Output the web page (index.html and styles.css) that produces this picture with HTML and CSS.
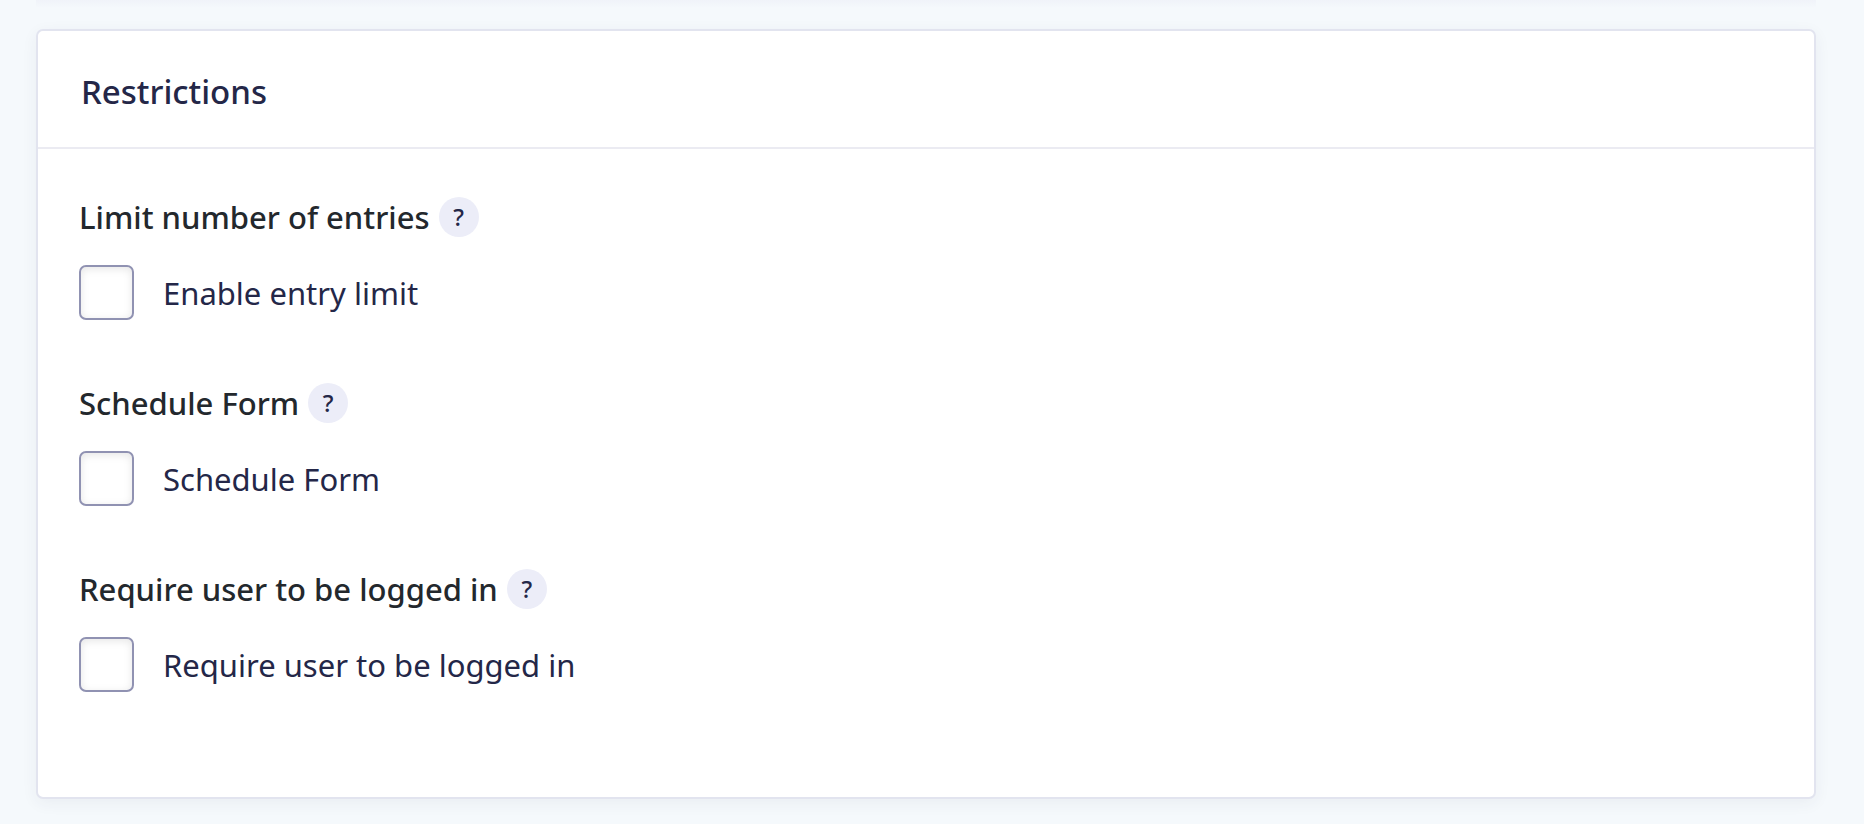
FILE: index.html
```
<!DOCTYPE html>
<html lang="en">
<head>
<meta charset="utf-8">
<title>Form Settings</title>
<link rel="stylesheet" href="styles.css">
</head>
<body>
<form class="settings">
  <section class="panel">
    <header class="panel-header">
      <h2 class="panel-title">Restrictions</h2>
    </header>
    <div class="panel-content">
      <div class="field">
        <div class="field-header">
          <h3 class="field-title">Limit number of entries</h3>
          <button type="button" class="tooltip">?</button>
        </div>
        <div class="choice">
          <input type="checkbox" id="limitEntries" name="limitEntries">
          <label for="limitEntries">Enable entry limit</label>
        </div>
      </div>
      <div class="field">
        <div class="field-header">
          <h3 class="field-title">Schedule Form</h3>
          <button type="button" class="tooltip">?</button>
        </div>
        <div class="choice">
          <input type="checkbox" id="scheduleForm" name="scheduleForm">
          <label for="scheduleForm">Schedule Form</label>
        </div>
      </div>
      <div class="field">
        <div class="field-header">
          <h3 class="field-title">Require user to be logged in</h3>
          <button type="button" class="tooltip">?</button>
        </div>
        <div class="choice">
          <input type="checkbox" id="requireLogin" name="requireLogin">
          <label for="requireLogin">Require user to be logged in</label>
        </div>
      </div>
    </div>
  </section>
</form>
</body>
</html>
```
FILE: styles.css
```
* {
	box-sizing:border-box;
}
body {
	margin:0;
	background-color:#f5f9fc;
	font-family:"Segoe UI", "Noto Sans", "Open Sans", sans-serif;
	font-size:31px;
	line-height:44px;
	color:#242748;
}
.settings {
	padding:0 48px 24px 36px;
}
/* bottom shadow of the panel above */
.settings::before {
	content:"";
	display:block;
	height:8px;
	margin-bottom:21px;
	background:linear-gradient(#f0f3f9, #f5f9fc);
}
.panel {
	border:2px solid #e2e4ef;
	border-radius:7px;
	background-color:#fff;
	box-shadow:0 4px 16px rgba(58, 58, 87, .06);
}
.panel-header {
	padding:39px 43px 33px;
	border-bottom:2px solid #ebebf2;
}
.panel-title {
	margin:0;
	font-size:33px;
	font-weight:500;
	line-height:44px;
}
.panel-content {
	display:flex;
	flex-direction:column;
	gap:61px;
	padding:46px 41px 105px;
}
.field-header {
	display:flex;
	align-items:center;
	gap:9px;
	margin-bottom:26px;
}
.field-title {
	margin:0;
	font-size:31px;
	font-weight:500;
	line-height:44px;
	color:#23282d;
}
.tooltip {
	width:40px;
	height:40px;
	padding:0;
	border:none;
	border-radius:50%;
	background-color:#ecedf8;
	font-family:inherit;
	font-size:24px;
	font-weight:500;
	line-height:40px;
	color:#242748;
}
.choice {
	display:flex;
	align-items:center;
	gap:29px;
}
.choice input {
	appearance:none;
	width:55px;
	height:55px;
	margin:0;
	border:2px solid #9092b2;
	border-radius:7px;
	background-color:#fff;
	box-shadow:inset 0 2px 8px rgba(0, 0, 0, .1);
}
```
